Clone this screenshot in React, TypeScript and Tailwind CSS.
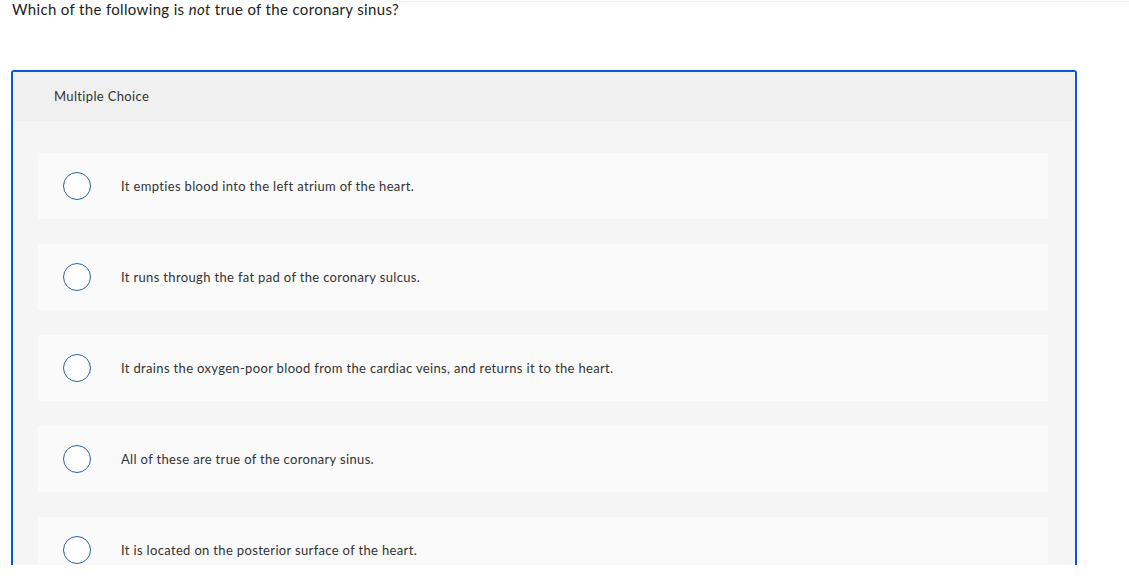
import React from 'react';

const options = [
  'It empties blood into the left atrium of the heart.',
  'It runs through the fat pad of the coronary sulcus.',
  'It drains the oxygen-poor blood from the cardiac veins, and returns it to the heart.',
  'All of these are true of the coronary sinus.',
  'It is located on the posterior surface of the heart.',
];

export default function App() {
  return (
    <div
      className="h-[565px] overflow-hidden bg-white text-[#333] tracking-[0.34px]"
      style={{ fontFamily: 'Lato, "Open Sans", Arial, sans-serif' }}
    >
      <div className="flex items-start">
        <p className="pl-[12px] text-[15px] leading-[18px] text-[#222]">
          Which of the following is <em>not</em> true of the coronary sinus?
        </p>
        <div className="mt-[1px] flex-1 border-t border-[#eeeeee]" />
      </div>

      <div className="ml-[11px] mt-[52px] w-[1066px] rounded-[3px] border-2 border-[#0a5ad6] bg-[#f5f5f5]">
        <div className="flex h-[49px] items-center bg-[#f0f0f0] pl-[41px] text-[13px]">
          Multiple Choice
        </div>
        <div className="flex flex-col gap-[25px] pl-[25px] pr-[27px] pt-[32px] pb-[30px]">
          {options.map((o) => (
            <div key={o} className="flex h-[66px] items-center bg-[#fafafa] pl-[25px]">
              <span className="h-[28px] w-[28px] shrink-0 rounded-full border-[1.5px] border-[#2a62a8] bg-white" />
              <span className="ml-[30px] pt-[2px] text-[13px]">{o}</span>
            </div>
          ))}
        </div>
      </div>
    </div>
  );
}
